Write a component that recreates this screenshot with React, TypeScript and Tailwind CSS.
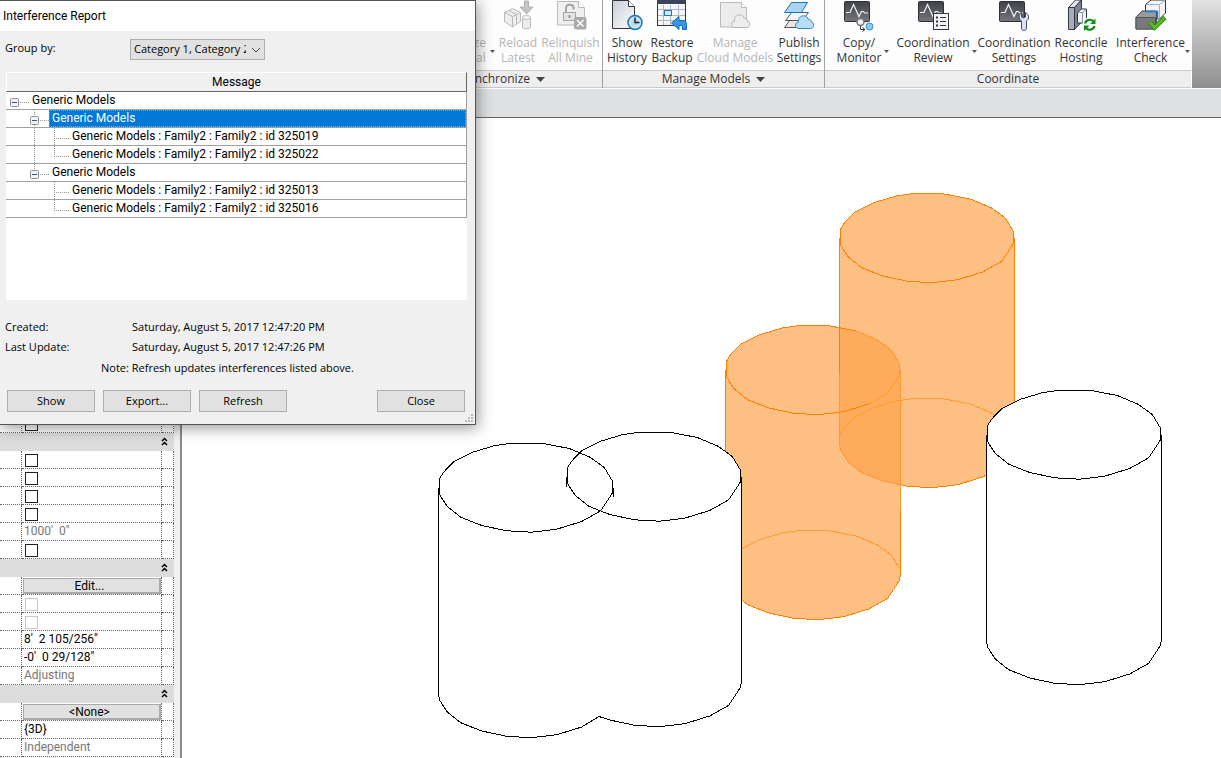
import type { ReactNode } from 'react';
import clsx from 'clsx';

type Point = [number, number];

const INK = '#33363d';
const FADED = '#b9b9b9';

export default function App() {
  return (
    <div className="relative flex min-h-screen flex-col overflow-hidden bg-white font-['Open_Sans',sans-serif] text-xs text-black">
      <Ribbon />
      <div className="h-[30px] border-t border-b border-t-white border-b-[#666] bg-[#dfe0e2]" />
      <main className="flex flex-1">
        <Properties />
        <Canvas />
      </main>
      <InterferenceReport />
    </div>
  );
}

/* Ribbon */

function Ribbon() {
  return (
    <header className="flex h-[88px] bg-linear-to-b from-[#e2e2e2] to-[#8f8f8f] text-[#333]">
      <RibbonGroup title="Synchronize" menu className="w-[603px]" titleClass="pr-[57px] justify-end">
        <div className="flex flex-1 justify-end pr-0.5">
          <Tool lines={['Synchronize', 'with Central']} className="w-[86px]" menu disabled />
          <Tool lines={['Reload', 'Latest']} className="w-[46px]" icon={<ReloadIcon />} disabled />
          <Tool lines={['Relinquish', 'All Mine']} className="w-[59px]" icon={<RelinquishIcon />} disabled />
        </div>
      </RibbonGroup>
      <RibbonGroup title="Manage Models" menu className="w-[222px]" titleClass="justify-center">
        <div className="flex pl-px">
          <Tool lines={['Show', 'History']} className="w-[46px]" icon={<HistoryIcon />} />
          <Tool lines={['Restore', 'Backup']} className="w-[44px]" icon={<RestoreIcon />} />
          <Tool lines={['Manage', 'Cloud Models']} className="w-[82px]" icon={<ManageCloudIcon />} disabled />
          <Tool lines={['Publish', 'Settings']} className="w-[46px]" icon={<PublishIcon />} />
        </div>
      </RibbonGroup>
      <RibbonGroup title="Coordinate" className="w-[367px]" titleClass="justify-center">
        <div className="flex pl-1">
          <Tool lines={['Copy/', 'Monitor']} className="w-[60px]" icon={<CopyMonitorIcon />} menu />
          <Tool lines={['Coordination', 'Review']} className="w-[88px]" icon={<ReviewIcon />} menu />
          <Tool lines={['Coordination', 'Settings']} className="w-[74px]" icon={<SettingsIcon />} />
          <Tool lines={['Reconcile', 'Hosting']} className="w-[60px]" icon={<ReconcileIcon />} />
          <Tool lines={['Interference', 'Check']} className="w-[79px]" icon={<InterferenceIcon />} menu />
        </div>
      </RibbonGroup>
    </header>
  );
}

type RibbonGroupProps = {
  title: string;
  menu?: boolean;
  className?: string;
  titleClass?: string;
  children: ReactNode;
};

function RibbonGroup({ title, menu, className, titleClass, children }: RibbonGroupProps) {
  return (
    <section
      aria-label={title}
      className={clsx(
        'flex shrink-0 flex-col border-r border-[#a3a3a6] bg-[#eee] last:border-white',
        className,
      )}
    >
      <div className="flex h-[70px] bg-[#fdfdfd]">{children}</div>
      <div
        className={clsx(
          'flex h-[18px] items-center gap-1.5 border-t border-b border-[#c9c9c9]',
          titleClass,
        )}
      >
        <span>{title}</span>
        {menu && (
          <svg width="9" height="5" aria-hidden="true">
            <path d="M0 0h9L4.500 5z" fill="#444" />
          </svg>
        )}
      </div>
    </section>
  );
}

type ToolProps = {
  lines: [string, string];
  icon?: ReactNode;
  menu?: boolean;
  disabled?: boolean;
  className?: string;
};

function Tool({ lines, icon, menu, disabled, className }: ToolProps) {
  return (
    <button
      type="button"
      disabled={disabled}
      className={clsx(
        'relative flex shrink-0 flex-col items-center leading-[15px] whitespace-nowrap',
        disabled && 'text-[#b5b5b5]',
        className,
      )}
    >
      <span className="mb-[3px] block h-8 w-10">{icon}</span>
      <span>{lines[0]}</span>
      <span>{lines[1]}</span>
      {menu && (
        <svg width="5" height="3" className="absolute right-0 bottom-[17px]" aria-hidden="true">
          <path d="M0 0h5L2.500 3z" fill="#555" />
        </svg>
      )}
    </button>
  );
}

/* Ribbon icons, all on a 40x32 grid */

function Icon({ children }: { children: ReactNode }) {
  return (
    <svg width="40" height="32" viewBox="0 0 40 32" fill="none" aria-hidden="true">
      {children}
    </svg>
  );
}

function Cloud({ x, y, fill, stroke }: { x: number; y: number; fill: string; stroke: string }) {
  return (
    <path
      transform={`translate(${x} ${y})`}
      d="M4 13.500C1.500 13.500.5 12 .5 10.300.5 8.500 1.800 7.300 3.400 7.200 3 3.500 5.200.8 8.500.8c2.700 0 4.300 1.500 4.700 3.600 2.100-.3 3.300 1 3.200 2.700 1.500.2 2.300 1.500 2.300 3 0 2-1.200 3.400-3.200 3.400z"
      fill={fill}
      stroke={stroke}
    />
  );
}

function ReloadIcon() {
  return (
    <Icon>
      <path d="M6.500 12.500l8-4 8 4v9l-8 5.500-8-5.500z" fill="#ededed" stroke={FADED} />
      <path d="M6.500 12.500l8 4 8-4M14.500 16.500v10M10.500 10.500l8 4v9" stroke={FADED} />
      <path d="M26.500 1h4v6h4.500l-6.500 7-6.500-7h4.500z" fill="#c4c4c4" stroke="#b0b0b0" />
      <path d="M24.500 17.500v9.500c0 2.500 8 2.500 8 0v-9.500" fill="#ededed" stroke={FADED} />
      <ellipse cx="28.500" cy="17.500" rx="4" ry="2" fill="#f7f7f7" stroke={FADED} />
    </Icon>
  );
}

function RelinquishIcon() {
  return (
    <Icon>
      <path d="M6.500 1.500h21l6 6v17.500h-27z" fill="#efefef" stroke={FADED} />
      <path d="M27.500 1.500v6h6" fill="#fff" stroke={FADED} />
      <path d="M15 12V8c0-4.500 7.500-4.500 7.500 0v1.500" stroke="#a5a5a5" strokeWidth="2" />
      <rect x="12.500" y="12.500" width="12" height="8" fill="#e4e4e4" stroke="#a5a5a5" />
      <path d="M18.500 15v3" stroke="#999" strokeWidth="2" />
      <rect x="23" y="17" width="12.500" height="12.500" rx="2" fill="#a9a9a9" />
      <path d="M26 20l6.500 6.500M32.500 20L26 26.500" stroke="#fff" strokeWidth="1.500" />
    </Icon>
  );
}

function HistoryIcon() {
  return (
    <Icon>
      <defs>
        <linearGradient id="sheet" x1="0" y1="0" x2="1" y2="1">
          <stop offset="0" stopColor="#c9ccd6" />
          <stop offset="1" stopColor="#fff" />
        </linearGradient>
      </defs>
      <path d="M5.500.5h16l6 6v22h-22z" fill="url(#sheet)" stroke={INK} />
      <path d="M21.500.5v6h6" fill="#fff" stroke={INK} />
      <circle cx="28" cy="22.500" r="7" fill="#b5dbf0" stroke="#1c76b8" strokeWidth="1.500" />
      <circle cx="28" cy="22.500" r="4.800" stroke="#e4f4fb" />
      <path d="M28 17.500v5h4.500" stroke="#222" strokeWidth="1.500" />
    </Icon>
  );
}

function RestoreIcon() {
  return (
    <Icon>
      <rect x="5.500" y="0" width="28" height="25.500" fill="#f4f5f8" stroke={INK} />
      <rect x="5" y="0" width="29" height="4" fill="#3d4459" />
      <path d="M6 9.500h27M6 15.500h27M6 20.500h27M11.500 5v20M18.500 5v20M26.500 5v20" stroke="#b4b6bd" />
      <rect x="12.500" y="10.500" width="7" height="5" fill="#cfe9f8" stroke="#1c76b8" />
      <path d="M19.500 23l7.500-6.500v4h3.500c2.500 0 4 1.500 4 4v5h-4v-2.500c0-1-.5-1.500-1.500-1.500h-2v4z" fill="#3296ec" stroke="#1567b3" />
    </Icon>
  );
}

function ManageCloudIcon() {
  return (
    <Icon>
      <path d="M5.500 2.500h21l5 5v19.500h-26z" fill="#ececec" stroke={FADED} />
      <path d="M26.500 2.500v5h5" fill="#fff" stroke={FADED} />
      <Cloud x={16} y={14} fill="#ededed" stroke="#b5b5b5" />
    </Icon>
  );
}

function PublishIcon() {
  return (
    <Icon>
      <path d="M5.500 27.500l5-7h18l-4 7z" fill="#e6e6e6" stroke="#555" />
      <path d="M6.500 20.500l6-8h17l-6 8z" fill="#f3f3f3" stroke="#555" />
      <path d="M5.500 12.500l7-10h16l-6 10z" fill="#a9d6ee" stroke="#1c76b8" />
      <Cloud x={16} y={15} fill="#b9def2" stroke="#2f8ac5" />
    </Icon>
  );
}

function Monitor() {
  return (
    <>
      <defs>
        <linearGradient id="screen" x1="0" y1="0" x2="0" y2="1">
          <stop offset="0" stopColor="#3f4248" />
          <stop offset="1" stopColor="#74767a" />
        </linearGradient>
      </defs>
      <rect x="5.500" y="1.500" width="25" height="20" rx="1" fill="url(#screen)" stroke="#2f3136" />
      <path d="M7 12.500h4l3.500-8 5.500 12 2.500-5h2l1 1.500H29" stroke="#f2f2f2" strokeWidth="1.200" />
    </>
  );
}

function CopyMonitorIcon() {
  return (
    <Icon>
      <Monitor />
      <path d="M21.500 25v4.500h4M23.500 27.500l2.500 2-2.500 2" stroke="#333" />
      <circle cx="21.500" cy="22" r="3.500" fill="#eee" stroke="#777" strokeWidth="1.500" />
      <circle cx="30.500" cy="26.500" r="3.500" fill="#8ccbf0" stroke="#2f8ac5" />
    </Icon>
  );
}

function ReviewIcon() {
  return (
    <Icon>
      <Monitor />
      <rect x="20.500" y="13.500" width="15" height="16" fill="#f1f3f7" stroke={INK} />
      <path d="M23 17.500h2M23 21.500h2M23 25.500h2" stroke="#333" strokeWidth="2" />
      <path d="M27 17.500h6M27 21.500h6M27 25.500h6" stroke="#333" />
    </Icon>
  );
}

function SettingsIcon() {
  return (
    <Icon>
      <Monitor />
      <path
        d="M27.500 12.500v4.500l2 1 2-1v-4.500c2 1 3.500 3 3 5.500-.3 1.500-1 2.300-2 3v7c0 1.500-1 2.500-2.500 2.500s-2.500-1-2.500-2.500v-7c-1.500-1-2.500-2.500-2.300-4.500.2-1.800 1-3.200 2.300-4z"
        fill="#dde3f0"
        stroke="#44506e"
      />
    </Icon>
  );
}

function ReconcileIcon() {
  return (
    <Icon>
      <path d="M7.500 7.500l7-7.500h6l-7 7.500z" fill="#e3e6ee" stroke={INK} />
      <path d="M7.500 7.500h6v22h-6z" fill="#a6adbd" stroke={INK} />
      <path d="M13.500 7.500l7-7.500v22l-7 7.500z" fill="#7d8498" stroke={INK} />
      <path d="M16.500 12.500l4-3.500h5v10l-4 4h-5z" fill="#f4f5f8" stroke={INK} />
      <path d="M16.500 12.500h5l4-3.500M21.500 12.500v10" stroke="#8c93a5" />
      <rect x="22" y="18" width="13" height="13" fill="#fdfdfd" />
      <path d="M24 23.500c1-4 6-5 8.500-2M33.500 26c-1 4-6 5-8.500 2" stroke="#0d8f1b" strokeWidth="2.200" />
      <path d="M34.500 18.500v5.500H29zM23 31v-5.500h5.500z" fill="#0d8f1b" />
    </Icon>
  );
}

function InterferenceIcon() {
  return (
    <Icon>
      <path d="M14.500 4.500L20 0h14.500v13l-6 6h-14z" fill="#f3f4f8" stroke={INK} />
      <path d="M14.500 4.500h14v14M28.500 4.500l6-4.500" stroke="#aab" />
      <path d="M5 17.500l6-6.500h14.500v10l-1.500 8H5z" fill="#9a9b9e" stroke="#444" />
      <path d="M5 17.500h19.500v11.500H5z" fill="#77787b" stroke="#555" />
      <path d="M14.500 11.500h12v7" stroke="#1680d8" strokeWidth="1.500" />
      <path d="M19 22.500l4.500 5L34 17.500" stroke="#2d7d0a" strokeWidth="4.500" />
      <path d="M19 22.500l4.500 5L34 17.500" stroke="#53bd1d" strokeWidth="3" />
    </Icon>
  );
}

/* Properties palette */

type PropertyRow =
  | { kind: 'section' }
  | { kind: 'check'; label: string; disabled?: boolean }
  | { kind: 'button'; text: string }
  | { kind: 'value'; text: string; muted?: boolean };

const PROPERTIES: PropertyRow[] = [
  { kind: 'check', label: 'Crop region' },
  { kind: 'section' },
  { kind: 'check', label: 'Crop view' },
  { kind: 'check', label: 'Crop region visible' },
  { kind: 'check', label: 'Annotation crop' },
  { kind: 'check', label: 'Far clip active' },
  { kind: 'value', text: "1000'  0\"", muted: true },
  { kind: 'check', label: 'Section box' },
  { kind: 'section' },
  { kind: 'button', text: 'Edit...' },
  { kind: 'check', label: 'Locked orientation', disabled: true },
  { kind: 'check', label: 'Perspective', disabled: true },
  { kind: 'value', text: "8'  2 105/256\"" },
  { kind: 'value', text: "-0'  0 29/128\"" },
  { kind: 'value', text: 'Adjusting', muted: true },
  { kind: 'section' },
  { kind: 'button', text: '<None>' },
  { kind: 'value', text: '{3D}' },
  { kind: 'value', text: 'Independent', muted: true },
];

function Properties() {
  return (
    <aside className="w-[182px] shrink-0 border-r-2 border-[#8a8a8a] bg-[#f0f0f0] pt-[297px] font-[Roboto,sans-serif]">
      <table className="w-[174px] table-fixed border-separate border-spacing-0 bg-white leading-4">
        <colgroup>
          <col className="w-[22px]" />
          <col className="w-[140px]" />
          <col className="w-3" />
        </colgroup>
        <tbody>
          {PROPERTIES.map((row, i) =>
            row.kind === 'section' ? (
              <tr key={i} className="h-[18px] bg-[#dcdcdc]">
                <td colSpan={3} className="p-0">
                  <button type="button" aria-label="Collapse section" className="mr-[6px] mb-0.5 ml-auto block">
                    <svg width="7" height="9" className="block" aria-hidden="true">
                      <path d="M1 4l2.500-2.500L6 4M1 8l2.500-2.500L6 8" fill="none" stroke="#000" strokeWidth="1.500" />
                    </svg>
                  </button>
                </td>
              </tr>
            ) : (
              <tr key={i} className="h-[18px]">
                <td className="border-r border-b border-dotted border-[#666] p-0" />
                <td className="border-r border-b border-dotted border-[#666] p-0">
                  <PropertyValue row={row} />
                </td>
                <td className="border-r border-b border-dotted border-[#666] p-0" />
              </tr>
            ),
          )}
        </tbody>
      </table>
    </aside>
  );
}

function PropertyValue({ row }: { row: PropertyRow }) {
  switch (row.kind) {
    case 'check':
      return (
        <input
          type="checkbox"
          aria-label={row.label}
          disabled={row.disabled}
          className="mt-[3px] mb-px ml-[3px] block size-[13px] appearance-none border border-[#222] bg-white disabled:border-[#c8c8c8]"
        />
      );
    case 'button':
      return (
        <div className="pt-px pl-px">
          <button
            type="button"
            className="block h-4 w-full border border-r-2 border-b-2 border-[#a9a9a9] bg-[#e1e1e1] pr-1 leading-[14px]"
          >
            {row.text}
          </button>
        </div>
      );
    case 'value':
      return (
        <span className={clsx('block h-[17px] pl-0.5 whitespace-pre', row.muted && 'text-[#777]')}>
          {row.text}
        </span>
      );
    default:
      return null;
  }
}

/* 3D view */

const RADIUS = 87.5;
const ORANGE = '#ff8000';
const HIDDEN = '#ff9a33';

// tessellated circle as the camera sees it, clockwise from the left, back half first
const CIRCLE: Point[] = [
  [-86.7, -8.3], [-82.7, -15], [-72, -26], [-54.3, -35], [-31, -42], [-14.3, -44.3],
  [15.7, -44.3], [43.3, -39], [64, -30.3], [78.3, -20], [86.3, -6.7],
  [86.3, 5.7], [74.7, 23.3], [55.7, 34], [30.7, 41.7], [5.7, 44.7],
  [-19.3, 43.3], [-44.3, 38], [-65.3, 29.7], [-78.7, 19], [-86.7, 6.7],
];

const ring = (cx: number, cy: number): Point[] => CIRCLE.map(([x, y]) => [cx + x, cy + y]);

const toPoints = (points: Point[]) =>
  points.map(([x, y]) => `${x.toFixed(1)},${y.toFixed(1)}`).join(' ');

// both arcs run left to right
const backArc = (cx: number, cy: number) => ring(cx, cy).slice(0, 11);
const frontArc = (cx: number, cy: number) => ring(cx, cy).slice(11).reverse();

const walls = (cx: number, top: number, base: number): Point[] => [
  [cx - RADIUS, top],
  [cx - RADIUS, base],
  ...frontArc(cx, base),
  [cx + RADIUS, base],
  [cx + RADIUS, top],
];

const silhouette = (cx: number, top: number, base: number): Point[] => [
  ...walls(cx, top, base),
  ...backArc(cx, top).reverse(),
];

function Canvas() {
  const joined: Point[] = [
    [256.5, 370],
    [256.5, 575],
    ...frontArc(344, 575).filter(([x]) => x < 410),
    [417, 598.5],
    ...frontArc(472, 564).filter(([x]) => x > 422),
    [559.5, 564],
    [559.5, 359],
  ];

  return (
    <section aria-label="3D view" className="flex-1 overflow-hidden">
      <svg width="1039" height="640" viewBox="0 0 1039 640" fill="none" shapeRendering="crispEdges">
        <defs>
          <clipPath id="front-body">
            <polygon points={toPoints(silhouette(631, 252, 457))} />
          </clipPath>
        </defs>

        <polygon points={toPoints(silhouette(745, 120, 325))} fill="#fdc082" />
        <polygon points={toPoints(silhouette(631, 252, 457))} fill="#fdc082" />
        <polygon points={toPoints(silhouette(745, 120, 325))} fill="#feac5b" clipPath="url(#front-body)" />

        <g stroke={ORANGE}>
          <polygon points={toPoints(ring(745, 120))} />
          <polyline points={toPoints(walls(745, 120, 325))} />
          <polygon points={toPoints(ring(631, 252))} />
          <polyline points={toPoints(walls(631, 252, 457))} />
        </g>
        <g stroke={HIDDEN}>
          <polyline points={toPoints(backArc(745, 325))} />
          <polyline points={toPoints(backArc(631, 457))} />
          <polyline points={toPoints(walls(745, 256, 325))} clipPath="url(#front-body)" />
          <polyline points={toPoints(ring(631, 252).slice(7, 14))} />
          <path d="M718.500 252v140" />
        </g>

        <polygon points={toPoints(silhouette(344, 369.5, 575))} fill="#fff" />
        <polygon points={toPoints(silhouette(472, 358.5, 564))} fill="#fff" />
        <polygon points={toPoints(silhouette(892, 316.5, 522))} fill="#fff" />
        <g stroke="#000">
          <polyline points={toPoints(joined)} />
          <polygon points={toPoints(ring(344, 369.5))} />
          <polygon points={toPoints(ring(472, 358.5))} />
          <path d="M431.500 370v9M384.500 359v10" />
          <polyline points={toPoints(walls(892, 316.5, 522))} />
          <polygon points={toPoints(ring(892, 316.5))} />
        </g>
      </svg>
    </section>
  );
}

/* Interference report dialog */

type TreeItem = {
  text: string;
  level: 0 | 1 | 2;
  last?: boolean;
  trunk?: boolean;
  selected?: boolean;
};

const CONFLICTS: TreeItem[] = [
  { text: 'Generic Models', level: 0 },
  { text: 'Generic Models', level: 1, selected: true },
  { text: 'Generic Models : Family2 : Family2 : id 325019', level: 2, trunk: true },
  { text: 'Generic Models : Family2 : Family2 : id 325022', level: 2, trunk: true, last: true },
  { text: 'Generic Models', level: 1, last: true },
  { text: 'Generic Models : Family2 : Family2 : id 325013', level: 2 },
  { text: 'Generic Models : Family2 : Family2 : id 325016', level: 2, last: true },
];

function InterferenceReport() {
  return (
    <div
      role="dialog"
      aria-labelledby="report-title"
      className="absolute top-0 left-0 w-[476px] border-t border-r border-b border-[#555] bg-[#f0f0f0] text-[11px] shadow-[2px_3px_14px_rgba(0,0,0,0.4)]"
    >
      <h1 id="report-title" className="h-[30px] bg-white pl-[3px] font-[Roboto,sans-serif] text-xs leading-[30px]">
        Interference Report
      </h1>
      <div className="flex h-[41px] items-start pt-2 pl-[5px]">
        <label htmlFor="group-by" className="w-[125px] leading-[18px]">
          Group by:
        </label>
        <div className="relative">
          <select
            id="group-by"
            className="h-[21px] w-[135px] appearance-none rounded-none border border-[#adadad] bg-[#e1e1e1] pr-[18px] pl-[3px]"
          >
            <option>Category 1, Category 2</option>
            <option>Category 2, Category 1</option>
          </select>
          <svg width="10" height="6" className="absolute top-2 right-1" aria-hidden="true">
            <path d="M1 1l4 4 4-4" fill="none" stroke="#444" />
          </svg>
        </div>
      </div>

      <div className="mx-[6px] mr-2 h-[228px] bg-white font-[Roboto,sans-serif] text-xs">
        <table className="w-full border-separate border-spacing-0">
          <thead>
            <tr className="h-5 bg-[#f0f0f0]">
              <th className="border border-t-white border-r-[#666] border-b-[#666] border-l-white p-0 leading-[18px] font-normal">
                Message
              </th>
            </tr>
          </thead>
          <tbody>
            {CONFLICTS.map((item, i) => (
              <tr key={i}>
                <td className="border-r border-b border-[#a0a0a0] p-0">
                  <div className="flex h-[17px] leading-[17px]">
                    <TreeGuide item={item} />
                    <span
                      className={clsx(
                        'flex-1 pl-[3px]',
                        item.selected && 'bg-[#0078d7] text-white outline-1 -outline-offset-1 outline-dotted outline-[#ff8728]',
                      )}
                    >
                      {item.text}
                    </span>
                  </div>
                </td>
              </tr>
            ))}
          </tbody>
        </table>
      </div>

      <dl className="mt-[17px] grid grid-cols-[127px_1fr] pl-[5px] leading-5">
        <dt>Created:</dt>
        <dd>Saturday, August 5, 2017 12:47:20 PM</dd>
        <dt>Last Update:</dt>
        <dd>Saturday, August 5, 2017 12:47:26 PM</dd>
      </dl>
      <p className="pl-[101px] leading-[22px]">Note: Refresh updates interferences listed above.</p>
      <div className="mt-[11px] mb-3 flex gap-2 pr-2.5 pl-[7px]">
        <DialogButton>Show</DialogButton>
        <DialogButton>Export...</DialogButton>
        <DialogButton>Refresh</DialogButton>
        <DialogButton className="ml-auto">Close</DialogButton>
      </div>
      <svg width="8" height="8" className="absolute right-0.5 bottom-0.5" aria-hidden="true">
        <path d="M6 0h2v2H6zM3 3h2v2H3zM6 3h2v2H6zM0 6h2v2H0zM3 6h2v2H3zM6 6h2v2H6z" fill="#bbb" />
      </svg>
    </div>
  );
}

function DialogButton({ className, children }: { className?: string; children: ReactNode }) {
  return (
    <button
      type="button"
      className={clsx('h-[22px] w-22 border border-[#adadad] bg-[#e1e1e1] leading-5', className)}
    >
      {children}
    </button>
  );
}

function TreeGuide({ item }: { item: TreeItem }) {
  const { level, last, trunk } = item;
  const dots = { stroke: '#999', strokeDasharray: '1 1' };

  if (level === 2) {
    return (
      <svg width="63" height="17" className="shrink-0" aria-hidden="true">
        {trunk && <path d="M28.500 0v17" {...dots} />}
        <path d={last ? 'M48.500 0v10' : 'M48.500 0v17'} {...dots} />
        <path d="M48 10.500h15" {...dots} />
      </svg>
    );
  }

  const x = level * 20 + 4;
  return (
    <button type="button" aria-label="Collapse" className="shrink-0">
      <svg width={x + 19} height="17" className="block" aria-hidden="true">
        {level > 0 && <path d={`M${x + 4.5} 0v6`} {...dots} />}
        {level > 0 && !last && <path d={`M${x + 4.5} 15v2`} {...dots} />}
        <path d={`M${x + 10} 10.500h9`} {...dots} />
        <rect x={x + 0.5} y="6.500" width="8" height="8" rx="1" fill="#f4f4f4" stroke="#919191" />
        <path d={`M${x + 2} 10.500h5`} stroke="#3455a4" />
      </svg>
    </button>
  );
}
